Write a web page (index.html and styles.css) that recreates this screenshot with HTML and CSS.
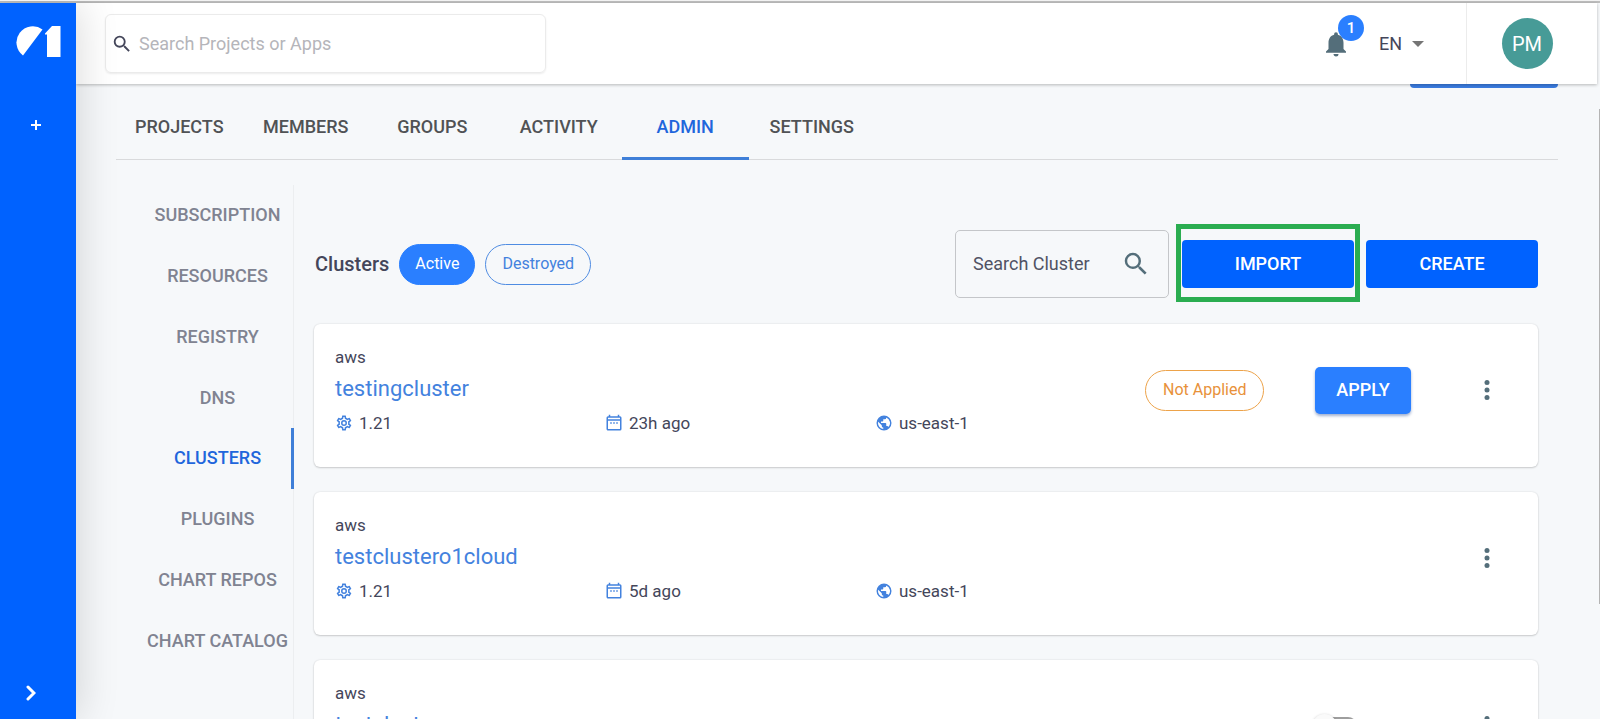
FILE: index.html
```
<!DOCTYPE html>
<html lang="en">
<head>
<meta charset="utf-8">
<title>Clusters</title>
<link rel="stylesheet" href="styles.css">
</head>
<body>
<svg class="sprite" aria-hidden="true">
  <symbol id="search" viewBox="0 0 24 24"><path d="M15.5 14h-.79l-.28-.27A6.47 6.47 0 0 0 16 9.5 6.5 6.5 0 1 0 9.5 16c1.61 0 3.09-.59 4.23-1.57l.27.28v.79l5 4.99L20.49 19l-4.99-5zm-6 0C7.01 14 5 11.99 5 9.5S7.01 5 9.5 5 14 7.01 14 9.5 11.99 14 9.5 14z"/></symbol>
  <symbol id="gear" viewBox="0 0 24 24"><path d="M19.43 12.98c.04-.32.07-.64.07-.98s-.03-.66-.07-.98l2.11-1.65c.19-.15.24-.42.12-.64l-2-3.46a.5.5 0 0 0-.61-.22l-2.49 1c-.52-.4-1.08-.73-1.69-.98l-.38-2.65A.49.49 0 0 0 14 2h-4c-.25 0-.46.18-.49.42l-.38 2.65c-.61.25-1.17.59-1.69.98l-2.49-1a.5.5 0 0 0-.61.22l-2 3.46c-.13.22-.07.49.12.64l2.11 1.65c-.04.32-.07.65-.07.98s.03.66.07.98l-2.11 1.65c-.19.15-.24.42-.12.64l2 3.46c.12.22.39.3.61.22l2.49-1c.52.4 1.08.73 1.69.98l.38 2.65c.03.24.24.42.49.42h4c.25 0 .46-.18.49-.42l.38-2.65c.61-.25 1.17-.59 1.69-.98l2.49 1c.23.09.49 0 .61-.22l2-3.46c.12-.22.07-.49-.12-.64l-2.11-1.65zm-1.98-1.71c.04.31.05.52.05.73s-.02.43-.05.73l-.14 1.13.89.7 1.08.84-.7 1.21-1.27-.51-1.04-.42-.9.68c-.43.32-.84.56-1.25.73l-1.06.43-.16 1.13-.2 1.35h-1.4l-.19-1.35-.16-1.13-1.06-.43a5.67 5.67 0 0 1-1.23-.71l-.91-.7-1.06.43-1.27.51-.7-1.21 1.08-.84.89-.7-.14-1.13c-.03-.31-.05-.54-.05-.74s.02-.43.05-.73l.14-1.13-.89-.7-1.08-.84.7-1.21 1.27.51 1.04.42.9-.68c.43-.32.84-.56 1.25-.73l1.06-.43.16-1.13.2-1.35h1.39l.19 1.35.16 1.13 1.06.43c.43.18.83.41 1.23.71l.91.7 1.06-.43 1.27-.51.7 1.21-1.07.85-.89.7.14 1.13zM12 8a4 4 0 1 0 0 8 4 4 0 0 0 0-8zm0 6a2 2 0 1 1 0-4 2 2 0 0 1 0 4z"/></symbol>
  <symbol id="calendar" viewBox="0 0 24 24"><path d="M20 3h-1V1h-2v2H7V1H5v2H4a2 2 0 0 0-2 2v15c0 1.100.9 2 2 2h16a2 2 0 0 0 2-2V5a2 2 0 0 0-2-2zm0 17H4V9h16v11zm0-13H4V5h16v2zM7 11h2v2H7zm4 0h2v2h-2zm4 0h2v2h-2z"/></symbol>
  <symbol id="globe" viewBox="0 0 24 24"><path d="M12 2a10 10 0 1 0 0 20 10 10 0 0 0 0-20zm-1 17.930A7.990 7.990 0 0 1 4.210 10.210L9 15v1c0 1.100.9 2 2 2v1.930zm6.900-2.540A1.990 1.990 0 0 0 16 16h-1v-3c0-.55-.45-1-1-1H8v-2h2c.55 0 1-.45 1-1V7h2a2 2 0 0 0 2-2v-.41a7.990 7.990 0 0 1 2.900 12.800z"/></symbol>
  <symbol id="dots" viewBox="0 0 24 24"><circle cx="12" cy="6" r="2"/><circle cx="12" cy="12" r="2"/><circle cx="12" cy="18" r="2"/></symbol>
</svg>

<div class="app">
  <aside class="rail">
    <svg class="logo" viewBox="0 0 46 32"><path d="M8 30.500A16 16 0 0 1 27.500 4.500z"/><path d="M30 8.500 37 1h8.500v31H32V9.500h-2z"/></svg>
    <button class="rail-button" type="button"><svg class="plus" viewBox="0 0 10 10"><path d="M5 0v10M0 5h10"/></svg></button>
    <button class="rail-button expand" type="button"><svg class="chevron" viewBox="0 0 10 16"><path d="M2 2l6 6-6 6"/></svg></button>
  </aside>

  <div class="page">
    <header class="topbar">
      <label class="project-search">
        <svg class="icon-22"><use href="#search"/></svg>
        <input type="search" placeholder="Search Projects or Apps">
      </label>
      <div class="top-actions">
        <button class="bell" type="button">
          <svg class="icon-30" viewBox="0 0 24 24"><path d="M12 22a2 2 0 0 0 2-2h-4c0 1.100.9 2 2 2zm6-6v-5c0-3.070-1.640-5.640-4.500-6.320V4a1.500 1.500 0 0 0-3 0v.68C7.630 5.360 6 7.920 6 11v5l-2 2v1h16v-1l-2-2z"/></svg>
          <span class="badge">1</span>
        </button>
        <label class="language">
          <select><option>EN</option></select>
          <svg class="caret" viewBox="0 0 12 6"><path d="M0 0h12L6 6z"/></svg>
        </label>
        <div class="account"><button class="avatar" type="button">PM</button></div>
      </div>
    </header>

    <main class="content">
      <div class="scrolled-action"></div>
      <nav class="tabs">
        <div class="tab-list">
          <a class="tab" href="#projects">PROJECTS</a>
          <a class="tab" href="#members">MEMBERS</a>
          <a class="tab" href="#groups">GROUPS</a>
          <a class="tab" href="#activity">ACTIVITY</a>
          <a class="tab active" href="#admin">ADMIN</a>
          <a class="tab" href="#settings">SETTINGS</a>
        </div>
      </nav>
      <div class="admin">
        <nav class="side-tabs">
          <div class="side-list">
            <a class="side-tab" href="#subscription">SUBSCRIPTION</a>
            <a class="side-tab" href="#resources">RESOURCES</a>
            <a class="side-tab" href="#registry">REGISTRY</a>
            <a class="side-tab" href="#dns">DNS</a>
            <a class="side-tab active" href="#clusters">CLUSTERS</a>
            <a class="side-tab" href="#plugins">PLUGINS</a>
            <a class="side-tab" href="#chart-repos">CHART REPOS</a>
            <a class="side-tab" href="#chart-catalog">CHART CATALOG</a>
          </div>
        </nav>
        <section class="clusters">
          <div class="toolbar">
            <h1 class="heading">Clusters</h1>
            <button class="chip filled" type="button">Active</button>
            <button class="chip" type="button">Destroyed</button>
            <label class="cluster-search">
              <input type="search" placeholder="Search Cluster">
              <svg class="icon-30"><use href="#search"/></svg>
            </label>
            <div class="highlight"><button class="primary" type="button">IMPORT</button></div>
            <button class="primary" type="button">CREATE</button>
          </div>

          <article class="card">
            <div class="summary">
              <p class="provider">aws</p>
              <h2 class="name"><a href="#testingcluster">testingcluster</a></h2>
              <div class="facts">
                <span class="fact"><svg class="icon-18"><use href="#gear"/></svg>1.21</span>
                <span class="fact"><svg class="icon-18"><use href="#calendar"/></svg>23h ago</span>
                <span class="fact"><svg class="icon-18"><use href="#globe"/></svg>us-east-1</span>
              </div>
            </div>
            <div class="status"><span class="chip warning">Not Applied</span></div>
            <div class="action"><button class="apply" type="button">APPLY</button></div>
            <button class="more" type="button"><svg class="icon-30"><use href="#dots"/></svg></button>
          </article>

          <article class="card">
            <div class="summary">
              <p class="provider">aws</p>
              <h2 class="name"><a href="#testclustero1cloud">testclustero1cloud</a></h2>
              <div class="facts">
                <span class="fact"><svg class="icon-18"><use href="#gear"/></svg>1.21</span>
                <span class="fact"><svg class="icon-18"><use href="#calendar"/></svg>5d ago</span>
                <span class="fact"><svg class="icon-18"><use href="#globe"/></svg>us-east-1</span>
              </div>
            </div>
            <div class="status"></div>
            <div class="action"></div>
            <button class="more" type="button"><svg class="icon-30"><use href="#dots"/></svg></button>
          </article>

          <article class="card">
            <div class="summary">
              <p class="provider">aws</p>
              <h2 class="name" id="third"><a href="#testcluster">testcluster</a></h2>
              <div class="facts"></div>
            </div>
            <div class="status"></div>
            <div class="action"><input class="switch" type="checkbox" aria-labelledby="third"></div>
            <button class="more" type="button"><svg class="icon-30"><use href="#dots"/></svg></button>
          </article>
        </section>
      </div>
      <div class="scroll-thumb"></div>
    </main>
  </div>
</div>
</body>
</html>
```
FILE: styles.css
```
* { box-sizing: border-box; }

body {
  margin: 0;
  background: #f6f8fa;
  color: #44465a;
  font: 400 17px/24px Roboto, "Liberation Sans", sans-serif;
}

button, input, select { font: inherit; color: inherit; border: 0; padding: 0; margin: 0; background: none; }
button { cursor: pointer; }
a { color: inherit; text-decoration: none; }
h1, h2, p { margin: 0; }
svg { display: block; flex: none; fill: currentColor; }

.sprite { position: absolute; width: 0; height: 0; }
.icon-18 { width: 18px; height: 18px; }
.icon-22 { width: 22px; height: 22px; }
.icon-30 { width: 30px; height: 30px; }

.app {
  display: flex;
  height: 100vh;
  overflow: hidden;
  border-top: 1px solid #f2f2f2;
  box-shadow: inset 0 2px #bdbdbd;
  padding-top: 2px;
}

.rail {
  position: relative;
  z-index: 3;
  flex: none;
  width: 76px;
  display: flex;
  flex-direction: column;
  align-items: flex-start;
  padding: 22px 15px 16px;
  background: #0062ff;
  color: #fff;
  box-shadow: 4px 0 40px rgba(0, 0, 0, .14);
}
.logo { width: 46px; height: 32px; }
.rail-button { display: grid; place-items: center; height: 20px; margin-left: 16px; }
.logo + .rail-button { margin-top: 58px; }
.rail-button.expand { margin-top: auto; margin-left: 11px; }
.rail-button svg { fill: none; stroke: currentColor; stroke-width: 2; }
.plus { width: 10px; height: 10px; }
.rail-button .chevron { width: 10px; height: 16px; stroke-width: 3; stroke-linecap: round; }

.page { flex: 1; min-width: 0; display: flex; flex-direction: column; }

.topbar {
  position: relative;
  z-index: 2;
  flex: none;
  display: flex;
  align-items: center;
  justify-content: space-between;
  height: 81px;
  margin-right: 3px;
  padding-left: 29px;
  background: #fff;
  font-size: 18px;
  box-shadow: 0 1px 3px rgba(0, 0, 0, .26);
}
.project-search {
  display: flex;
  align-items: center;
  gap: 6px;
  width: 441px;
  height: 59px;
  padding-left: 5px;
  border: 1px solid #ebebeb;
  border-radius: 6px;
  box-shadow: 0 1px 2px rgba(0, 0, 0, .08);
}
.project-search input { flex: 1; outline: 0; }
.project-search input::placeholder { color: #b5b5ba; opacity: 1; }
.top-actions { display: flex; align-items: center; align-self: stretch; }
.bell { position: relative; color: #546e7a; }
.badge {
  position: absolute;
  left: 17px;
  top: -14px;
  width: 26px;
  height: 26px;
  border-radius: 50%;
  background: #2a7fff;
  color: #fff;
  font: 500 15px/26px Roboto, sans-serif;
}
.language { display: flex; align-items: center; gap: 9px; margin: 0 42px 0 28px; }
.language select { appearance: none; outline: 0; }
.caret { width: 12px; height: 6px; color: #757575; }
.account {
  display: grid;
  place-items: center;
  align-self: stretch;
  width: 131px;
  padding-right: 10px;
  border-left: 1px solid #ececec;
}
.avatar { width: 51px; height: 51px; border-radius: 50%; background: #479b97; color: #fff; font-size: 20px; }

.content {
  position: relative;
  flex: 1;
  min-height: 0;
  overflow: hidden;
  display: flex;
  flex-direction: column;
  padding: 0 42px 0 40px;
}
.scrolled-action {
  flex: none;
  align-self: flex-end;
  width: 148px;
  height: 4px;
  border-radius: 0 0 5px 5px;
  background: #3a7ce0;
}
.tabs { flex: none; border-bottom: 1px solid #d9dadc; }
.tab-list { display: grid; grid-template-columns: repeat(6, 1fr); width: 759px; }
.tab {
  padding: 27px 0 18px;
  margin-bottom: -1px;
  border-bottom: 3px solid transparent;
  color: #505255;
  font-size: 18px;
  font-weight: 500;
  text-align: center;
}
.tab.active { color: #1f66dc; border-color: #3f7fd8; }

.admin { flex: none; display: flex; gap: 20px; padding: 25px 20px 0 28px; }
.side-tabs { flex: none; width: 150px; border-right: 1px solid #eceef0; }
.side-list { display: grid; grid-auto-rows: 1fr; height: 486px; margin-right: -1px; }
.side-tab {
  display: grid;
  place-items: center;
  border-right: 3px solid transparent;
  color: #808391;
  font-size: 18px;
  font-weight: 500;
  white-space: nowrap;
}
.side-tab.active { color: #1f66dc; border-color: #3f7fd8; }

.clusters { flex: 1; min-width: 0; padding-top: 41px; }
.toolbar { display: flex; align-items: center; height: 76px; margin-bottom: 22px; }
.heading { margin: 0 10px 0 1px; font-size: 20px; font-weight: 500; }
.chip {
  height: 41px;
  padding: 0 15px;
  border: 1px solid #4f8ce2;
  border-radius: 21px;
  color: #4382de;
  font-size: 17px;
  line-height: 38px;
}
.toolbar .chip { font-size: 16px; padding: 0 16px; }
.toolbar .chip.filled { padding: 0 15px; margin-right: 10px; border-color: #2a7fff; background: #2a7fff; color: #fff; }
.status .chip { display: inline-block; border-color: #eda34a; color: #e8913a; font-size: 16px; padding: 0 17px; }
.cluster-search {
  display: flex;
  align-items: center;
  width: 214px;
  height: 68px;
  margin: 0 7px 0 auto;
  padding: 0 17px;
  border: 1px solid #c4c6c9;
  border-radius: 5px;
  font-size: 18px;
}
.cluster-search input { flex: 1; min-width: 0; outline: 0; }
.cluster-search input::placeholder { color: #505264; opacity: 1; }
.cluster-search svg { color: #546e7a; }
.highlight { flex: none; margin: 0 6px 2px 0; padding: 11px 1px 9px; border: 5px solid #2aad50; }
.primary {
  display: block;
  width: 172px;
  height: 48px;
  border-radius: 4px;
  background: #0062ff;
  color: #fff;
  font-size: 18px;
  font-weight: 500;
}

.card {
  display: flex;
  align-items: center;
  height: 143px;
  padding: 0 36px 11px 21px;
  border-radius: 6px;
  background: #fff;
  box-shadow: 0 1px 2px rgba(0, 0, 0, .16), 0 0 2px rgba(0, 0, 0, .12);
}
.card + .card { margin-top: 25px; }
.summary { flex: 1; align-self: flex-start; padding-top: 21px; }
.name { margin-top: 5px; font-size: 22px; font-weight: 400; line-height: 30px; color: #4382de; }
.facts { display: grid; grid-template-columns: repeat(3, 270px); margin-top: 7px; }
.fact { display: flex; align-items: center; gap: 6px; }
.fact svg { color: #4382de; }
.status { width: 171px; }
.action { width: 158px; display: flex; }
.apply {
  width: 96px;
  height: 47px;
  border-radius: 5px;
  background: #2a7fff;
  color: #fff;
  font-size: 18px;
  font-weight: 500;
  box-shadow: 0 2px 3px rgba(20, 60, 140, .4);
}
.more { color: #546e7a; }

.switch {
  appearance: none;
  display: flex;
  align-items: center;
  width: 40px;
  height: 18px;
  margin: 0 0 0 2px;
  border-radius: 9px;
  background: #9e9e9e;
}
.switch::before {
  content: "";
  width: 25px;
  height: 25px;
  margin-left: -5px;
  border-radius: 50%;
  background: #fafafa;
  box-shadow: 0 1px 3px rgba(0, 0, 0, .3);
}

.scroll-thumb { position: absolute; right: 0; top: 25px; width: 1px; height: 78%; background: #b4b4b4; }
```
